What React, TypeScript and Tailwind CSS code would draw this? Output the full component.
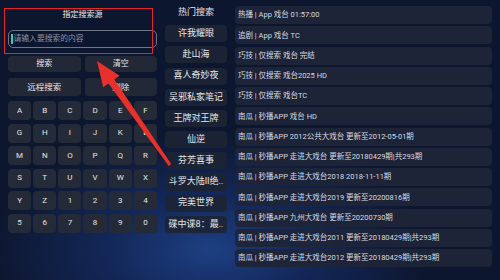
const cjk = "font-['Roboto','Noto_Sans_CJK_SC',sans-serif]";

const keys = 'ABCDEFGHIJKLMNOPQRSTUVWXYZ1234567890'.split('');

const hotList = [
  '许我耀眼',
  '赴山海',
  '喜人奇妙夜',
  '吴邪私家笔记',
  '王牌对王牌',
  '仙逆',
  '芬芳喜事',
  '斗罗大陆II绝..',
  '完美世界',
  '碟中谍8：最..',
];

const results = [
  '热播 | App 戏台 01:57:00',
  '追剧 | App 戏台 TC',
  '巧技 | 仅搜索 戏台 完结',
  '巧技 | 仅搜索 戏台2025 HD',
  '巧技 | 仅搜索 戏台TC',
  '南瓜 | 秒播APP 戏台 HD',
  '南瓜 | 秒播APP 2012公共大戏台 更新至2012-05-01期',
  '南瓜 | 秒播APP 走进大戏台 更新至20180429期|共293期',
  '南瓜 | 秒播APP 走进大戏台2018 2018-11-11期',
  '南瓜 | 秒播APP 走进大戏台2019 更新至20200816期',
  '南瓜 | 秒播APP 九州大戏台 更新至20200730期',
  '南瓜 | 秒播APP 走进大戏台2011 更新至20180429期|共293期',
  '南瓜 | 秒播APP 走进大戏台2012 更新至20180429期|共293期',
];

/** 左侧：搜索框 + 键盘 */
function SearchPanel() {
  return (
    <div className="w-[165px] shrink-0 pl-[8px] pr-[8px]">
      <div className="mt-[8px] h-[14px] text-center text-[8px] leading-[14px] text-[#e8e8ec]">指定搜索源</div>
      <div className="mt-[8px] flex h-[18px] items-center rounded-[5px] border border-[#6e7585] pl-[2px]">
        <span className="h-[10px] w-[1.5px] bg-[#2fd0a8]" />
        <span className="ml-[1px] text-[7.8px] text-[#8c93a1]">请输入要搜索的内容</span>
      </div>
      <div className="mt-[8px] grid grid-cols-2 gap-[4px]">
        <button className="h-[16px] rounded-[4px] bg-[#222836] text-[8px] text-[#e6e6ea]">搜索</button>
        <button className="h-[16px] rounded-[4px] bg-[#222836] text-[8px] text-[#e6e6ea]">清空</button>
      </div>
      <div className="mt-[6px] grid grid-cols-2 gap-[4px]">
        <button className="h-[18px] rounded-[4px] bg-[#222836] text-[8.5px] text-[#e6e6ea]">远程搜索</button>
        <button className="h-[18px] rounded-[4px] bg-[#222836] text-[8.5px] text-[#e6e6ea]">删除</button>
      </div>
      <div className="mt-[5px] grid grid-cols-6 gap-x-[2px] gap-y-[3.5px]">
        {keys.map((k) => (
          <div
            key={k}
            className="flex h-[19px] items-center justify-center rounded-[4px] bg-[#242a37] text-[8px] text-[#e4e6ea]"
          >
            {k}
          </div>
        ))}
      </div>
    </div>
  );
}

export default function App() {
  return (
    <div
      className={`relative h-[280px] w-[500px] overflow-hidden bg-[radial-gradient(ellipse_220px_120px_at_210px_250px,#1d3f82_0%,#13285a_45%,#0c162e_100%)] ${cjk}`}
    >
      <div className="flex h-full">
        <SearchPanel />

        {/* 热门搜索 */}
        <div className="flex w-[62px] shrink-0 flex-col gap-[4.2px] pt-[4px]">
          <div className="flex h-[17px] items-center justify-center text-[9px] text-[#e4e6ea]">热门搜索</div>
          {hotList.map((name) => (
            <div
              key={name}
              className="flex h-[17px] items-center justify-center rounded-[4px] bg-[#1d2334]/90 text-[9px] whitespace-nowrap text-[#e4e6ea]"
            >
              {name}
            </div>
          ))}
        </div>

        {/* 搜索结果 */}
        <div className="ml-[8px] flex w-[257px] shrink-0 flex-col gap-[2.25px] pt-[6px]">
          {results.map((r, i) => (
            <div
              key={i}
              className="flex h-[18px] items-center rounded-[4px] bg-[#1f2538]/95 pl-[3px] text-[7.5px] whitespace-pre text-[#d8dbe2]"
            >
              {r}
            </div>
          ))}
        </div>
      </div>

      {/* 标注：红框 + 箭头 */}
      <div className="pointer-events-none absolute top-[8px] left-[4px] h-[46px] w-[149px] border-[1.5px] border-[#e3262b]" />
      <svg className="pointer-events-none absolute top-0 left-0" width="500" height="280">
        <polygon
          points="97,61 119.6,75.7 114.3,79.5 171.2,164.1 168.8,165.9 108.5,83.5 103.2,87.3"
          fill="#e8302c"
        />
      </svg>
    </div>
  );
}
